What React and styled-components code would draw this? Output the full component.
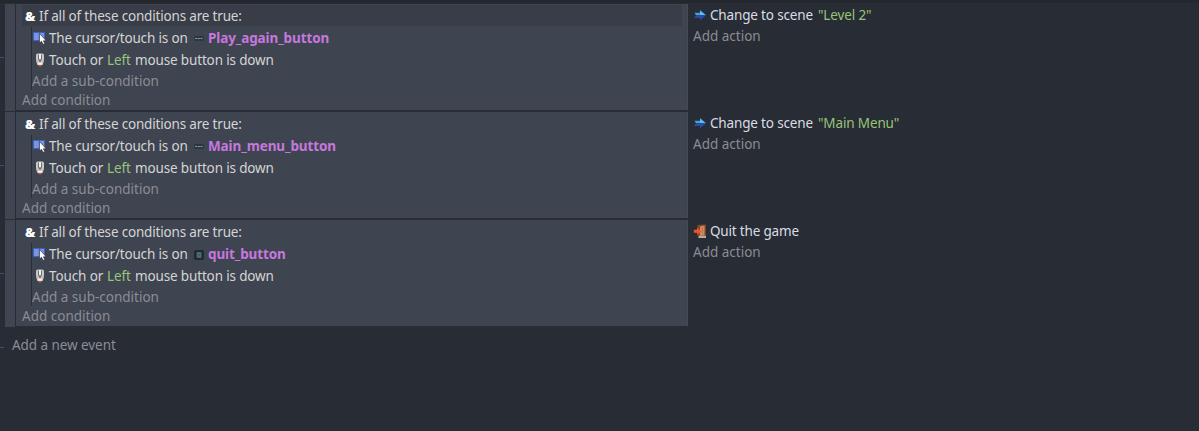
import React from 'react';
import styled, { createGlobalStyle } from 'styled-components';

const Global = createGlobalStyle`
  * { box-sizing: border-box; }
  body { margin: 0; background: #282c34; overflow: hidden; }
`;

const Sheet = styled.main`
  height: 431px;
  padding-top: 1px;
  background: #282c34;
  border-top: 3px solid #25272f;
  font: 13.5px/20px "Noto Sans", "Open Sans", sans-serif;
  color: #d4d4d4;
  white-space: nowrap;
`;

const EventRow = styled.section`
  display: grid;
  grid-template-columns: 5px 11px 672px 1fr;
  height: 108px;
`;

const Gutter = styled.div`
  padding-top: 53px;
`;

const Tick = styled.div`
  width: 4px;
  height: 1px;
  background: #4b4f59;
`;

const Handle = styled.div`
  width: 10px;
  height: 107px;
  background: #404552;
`;

const Conditions = styled.div`
  height: 106px;
  padding: 1px 6px 0;
  background: #3f4451;
  border-right: 1px solid #454a57;
`;

const Header = styled.div`
  display: flex;
  align-items: center;
  height: 21px;
  padding-left: 2px;
  margin-right: -1px;
  background: ${(p) => (p.$active ? '#383d48' : 'transparent')};
`;

const Ampersand = styled.span`
  width: 15px;
  padding: 2px 0 0 1px;
  color: #fff;
  font-size: 13px;
  font-weight: 900;
  line-height: 19px;
`;

const SubTree = styled.div`
  height: 63px;
  margin: 1px 0 0 9px;
  border-left: 1px solid #2a2e37;
`;

const Line = styled.div`
  display: flex;
  align-items: center;
  height: ${(p) => p.$h || 22}px;
  padding-left: ${(p) => p.$indent || 0}px;
`;

const Icon = styled.svg`
  display: block;
  flex: none;
  width: 14px;
  height: 14px;
  margin-right: ${(p) => p.$gap || 0}px;
`;

const Text = styled.span`
  flex: none;
  width: ${(p) => (p.$w ? `${p.$w}px` : 'auto')};
  letter-spacing: ${(p) => p.$track || 0}px;
`;

const Value = styled(Text)`
  color: #98c379;
`;

const ObjectName = styled(Text)`
  color: #c678dd;
  font-weight: 700;
`;

const Add = styled(Text)`
  color: #8a8d94;
`;

const Actions = styled.div`
  padding-left: 5px;
  color: #d9dde5;
`;

const Footer = styled.div`
  display: flex;
  align-items: center;
  height: 34px;
  gap: 8px;
`;

const FooterTick = styled(Tick)`
  margin-top: 5px;
`;

const CursorIcon = () => (
  <Icon viewBox="0 0 14 14" $gap={2}>
    <rect x=".5" y="1.5" width="11" height="8" fill="#7895df" stroke="#3d60c4" />
    <path d="M6 2V9" stroke="#6181d5" />
    <path d="M6.5 2.5V12L8.5 10.3L10 13.4L11.8 12.6L10.4 9.8H13.2Z" fill="#fff" stroke="#20242d" strokeWidth=".6" />
  </Icon>
);

const MouseIcon = () => (
  <Icon viewBox="0 0 14 14" $gap={2}>
    <path d="M3 2Q3 .5 4.5 .5H9.5Q11 .5 11 2V6.5Q11 9 9.5 12H4.5Q3 9 3 6.5Z" fill="#c9c7c5" />
    <path d="M5 1.5V6L6.2 8.7H7.8L9 6V1.5Z" fill="#717073" />
    <path d="M7 1V6.3" stroke="#f2f0ee" strokeWidth="2" />
    <path d="M4.8 10.7H9.2" stroke="#f2efec" strokeWidth="1.7" />
    <path d="M4.8 12H9.2L7 13.8Z" fill="#d75549" />
  </Icon>
);

const ArrowIcon = () => (
  <Icon viewBox="0 0 14 14" $gap={3}>
    <path d="M1.5 4.7H7V2L13.2 7.3H3Z" fill="#38a5df" />
    <path d="M3 7.3H13.2L7 12.2V10H.8Z" fill="#2c4ba2" />
    <path d="M7.2 3L12 7.1H8.2L6 5.7H7.2Z" fill="#60c2ea" />
  </Icon>
);

const DoorIcon = () => (
  <Icon viewBox="0 0 14 14" $gap={3}>
    <path d="M4.5 1L12.8 .5V12H4.5Z" fill="#80492f" />
    <path d="M7 2.5L11.5 1.5V11L7 12Z" fill="#cf8a58" />
    <path d="M6 11.7H13V14H5Z" fill="#b8aba0" />
    <path d="M9.5 3V9.5" stroke="#b47550" />
    <path d="M.8 5.8H4V3.4L8.3 7.2L4 10.8V8.7H.8Z" fill="#f0512f" />
  </Icon>
);

const ObjectIcon = ({ square }) => (
  <Icon viewBox="0 0 14 14" $gap={2}>
    {square ? (
      <>
        <rect x="2" y="3" width="10" height="10" rx="1.8" fill="#1d2a32" />
        <rect x="4.5" y="5" width="5" height="6" fill="#49616a" />
        <path d="M6.5 6.5H8V9.5H6.5Z" fill="#294049" stroke="#718990" strokeWidth=".5" />
      </>
    ) : (
      <>
        <rect x="2" y="5" width="10" height="5" rx="1" fill="#2b3842" />
        <path d="M3 7.5H11" stroke="#7d999e" strokeDasharray="2.2 .5" />
      </>
    )}
  </Icon>
);

const events = [
  { object: 'Play_again_button', scene: '"Level 2"' },
  { object: 'Main_menu_button', scene: '"Main Menu"' },
  { object: 'quit_button', square: true },
];

function Event({ event, active }) {
  return (
    <EventRow>
      <Gutter><Tick /></Gutter>
      <Handle />
      <Conditions>
        <Header $active={active}>
          <Ampersand>&amp;</Ampersand>
          <Text $track={-0.18}>If all of these conditions are true:</Text>
        </Header>
        <SubTree>
          <Line $indent={1}>
            <CursorIcon />
            <Text $w={143} $track={-0.17}>The cursor/touch is on</Text>
            <ObjectIcon square={event.square} />
            <ObjectName $track={-0.11}>{event.object}</ObjectName>
          </Line>
          <Line $indent={1}>
            <MouseIcon />
            <Text $w={58} $track={-0.12}>Touch or</Text>
            <Value $w={28} $track={-0.1}>Left</Value>
            <Text $track={-0.15}>mouse button is down</Text>
          </Line>
          <Line $h={20}><Add>Add a sub-condition</Add></Line>
        </SubTree>
        <Line $h={20}><Add>Add condition</Add></Line>
      </Conditions>
      <Actions>
        <Line>
          {event.scene ? <ArrowIcon /> : <DoorIcon />}
          {event.scene ? (
            <>
              <Text $w={108} $track={-0.16}>Change to scene</Text>
              <Value $track={-0.14}>{event.scene}</Value>
            </>
          ) : <Text $track={-0.18}>Quit the game</Text>}
        </Line>
        <Line $h={20}><Add>Add action</Add></Line>
      </Actions>
    </EventRow>
  );
}

export default function App() {
  return (
    <>
      <Global />
      <Sheet>
        {events.map((event, i) => <Event key={event.object} event={event} active={i === 0} />)}
        <Footer><FooterTick /><Add $track={-0.06}>Add a new event</Add></Footer>
      </Sheet>
    </>
  );
}
